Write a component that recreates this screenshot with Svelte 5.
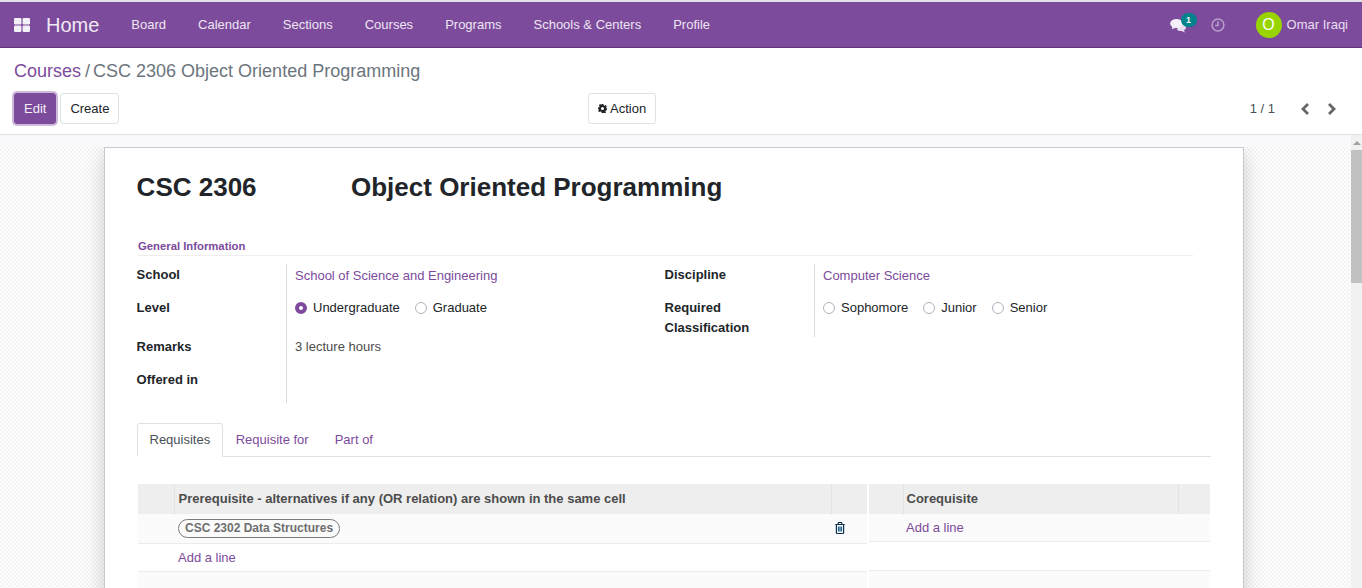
<script>
  const navItems = ['Board', 'Calendar', 'Sections', 'Courses', 'Programs', 'Schools & Centers', 'Profile'];
  const tabs = ['Requisites', 'Requisite for', 'Part of'];
</script>

<div class="page">
  <div class="topline"></div>
  <header class="nav">
    <svg class="apps" width="16" height="14" viewBox="0 0 16 14" aria-hidden="true">
      <rect x="0" y="0" width="7.4" height="6.4" rx="1.2" />
      <rect x="8.6" y="0" width="7.4" height="6.4" rx="1.2" />
      <rect x="0" y="7.6" width="7.4" height="6.4" rx="1.2" />
      <rect x="8.6" y="7.6" width="7.4" height="6.4" rx="1.2" />
    </svg>
    <span class="brand">Home</span>
    <nav class="menu">
      {#each navItems as item}
        <span>{item}</span>
      {/each}
    </nav>
    <div class="systray">
      <div class="chat">
        <svg width="17" height="15" viewBox="0 0 17 15" aria-hidden="true">
          <path class="back" d="M9 5c3.6 0 7 1.7 7 4.2 0 1.300-.9 2.300-2 3l.9 2.300-3.300-1.500c-1.500.2-3.600-.1-4.600-1.200z" />
          <ellipse cx="6.500" cy="5.500" rx="6.300" ry="4.500" />
          <path d="M2.500 8l-.6 3.200L6 9.500z" />
        </svg>
        <span class="badge">1</span>
      </div>
      <svg class="clock" width="14" height="14" viewBox="0 0 14 14" aria-hidden="true">
        <circle cx="7" cy="7" r="5.900" />
        <path d="M7 3.200V7.400H4.200" />
      </svg>
      <div class="user">
        <span class="avatar">O</span>
        <span class="username">Omar Iraqi</span>
      </div>
    </div>
  </header>

  <section class="panel">
    <div class="crumbs"><span class="crumb-link">Courses</span><span class="crumb-sep">/</span><span>CSC 2306 Object Oriented Programming</span></div>
    <div class="actions">
      <div class="left-btns">
        <button class="btn primary">Edit</button>
        <button class="btn">Create</button>
      </div>
      <button class="btn action">
        <svg width="9" height="9" viewBox="0 0 10 10" aria-hidden="true">
          <path fill-rule="evenodd" d="M4 0h2l.3 1.400 1.100.5L8.600 1.100 9.900 2.500 9 3.700l.4 1 .6.300v1.700l-1.300.4-.5 1 .8 1.200-1.400 1.300-1.200-.8-1 .4L6 10H4l-.3-1.400-1-.4-1.200.8L.1 7.700l.8-1.200-.5-1L0 5.200V3.800l1.300-.3.400-1L1 1.300 2.300.1l1.200.8 .3-.1zM5 3.300a1.700 1.700 0 1 0 0 3.400 1.700 1.700 0 0 0 0-3.400z" />
        </svg>
        Action
      </button>
      <div class="pager">
        <span class="count">1 / 1</span>
        <svg width="10" height="14" viewBox="0 0 10 14" aria-hidden="true"><path d="M8 2 3 7l5 5" /></svg>
        <svg width="10" height="14" viewBox="0 0 10 14" aria-hidden="true"><path d="M2 2l5 5-5 5" /></svg>
      </div>
    </div>
  </section>

  <div class="content">
    <main class="scroller">
      <article class="sheet">
        <h1 class="title"><span class="code">CSC 2306</span><span>Object Oriented Programming</span></h1>

        <h2 class="group-title">General Information</h2>

        <div class="groups">
          <div class="group g-left">
            <div class="label">School</div>
            <div class="value"><span class="link">School of Science and Engineering</span></div>
            <div class="label">Level</div>
            <div class="value radios">
              <label class="radio"><i class="dot on"></i>Undergraduate</label>
              <label class="radio"><i class="dot"></i>Graduate</label>
            </div>
            <div class="label">Remarks</div>
            <div class="value muted">3 lecture hours</div>
            <div class="label">Offered in</div>
            <div class="value"></div>
          </div>

          <div class="group g-right">
            <div class="label">Discipline</div>
            <div class="value"><span class="link">Computer Science</span></div>
            <div class="label">Required Classification</div>
            <div class="value radios">
              <label class="radio"><i class="dot"></i>Sophomore</label>
              <label class="radio"><i class="dot"></i>Junior</label>
              <label class="radio"><i class="dot"></i>Senior</label>
            </div>
          </div>
        </div>

        <div class="tabs">
          {#each tabs as tab, i}
            <span class="tab" class:active={i === 0}>{tab}</span>
          {/each}
        </div>

        <div class="tables">
          <table class="list t-left">
            <thead>
              <tr>
                <th class="c-handle"></th>
                <th>Prerequisite - alternatives if any (OR relation) are shown in the same cell</th>
                <th class="c-end"></th>
              </tr>
            </thead>
            <tbody>
              <tr class="r1">
                <td></td>
                <td><span class="pill">CSC 2302 Data Structures</span></td>
                <td class="trash">
                  <svg width="10" height="12" viewBox="0 0 10 12" aria-hidden="true">
                    <path d="M.3 2.500h9.400M3.200 2.300V1.200c0-.4.300-.7.700-.7h2.200c.4 0 .7.300.7.700v1.100" />
                    <path d="M1.400 2.500v8c0 .6.400 1 1 1h5.200c.6 0 1-.4 1-1v-8" />
                    <path class="bars" d="M3.500 4.500v5M5 4.500v5M6.500 4.500v5" />
                  </svg>
                </td>
              </tr>
              <tr class="r2 add"><td></td><td><span class="link">Add a line</span></td><td></td></tr>
              <tr class="fill"><td></td><td></td><td></td></tr>
            </tbody>
          </table>

          <table class="list t-right">
            <thead>
              <tr>
                <th class="c-handle"></th>
                <th>Corequisite</th>
                <th class="c-end"></th>
              </tr>
            </thead>
            <tbody>
              <tr class="r1 alt"><td></td><td><span class="link">Add a line</span></td><td></td></tr>
              <tr class="r2 alt"><td></td><td></td><td></td></tr>
              <tr class="fill"><td></td><td></td><td></td></tr>
            </tbody>
          </table>
        </div>
      </article>
    </main>

    <aside class="scrollbar">
      <div class="arrow"></div>
      <div class="thumb"></div>
    </aside>
  </div>
</div>

<style>
  :global(body) {
    margin: 0;
    background: #fff;
  }
  .page {
    height: 588px;
    overflow: hidden;
    display: flex;
    flex-direction: column;
    font-family: "Liberation Sans", Arial, sans-serif;
    font-size: 13px;
    line-height: 20px;
    color: #212529;
  }
  .topline {
    height: 2px;
    background: #e6e3e8;
    flex: none;
  }
  .nav {
    flex: none;
    height: 45px;
    background: #7c4b9c;
    border-bottom: 1px solid #5e3579;
    display: flex;
    align-items: center;
    padding-left: 14px;
    color: #f0e9f4;
  }
  .apps {
    fill: #f4f0f7;
    flex: none;
  }
  .brand {
    margin-left: 16px;
    font-size: 20px;
    color: #f0eaf4;
  }
  .menu {
    display: flex;
    gap: 32px;
    margin-left: 32px;
  }
  .menu span {
    color: #eee6f2;
  }
  .systray {
    margin-left: auto;
    display: flex;
    align-items: center;
    padding-right: 14px;
  }
  .chat {
    position: relative;
    width: 17px;
    height: 15px;
    margin-right: 24px;
    top: 1px;
  }
  .chat svg {
    display: block;
    fill: #f5effa;
  }
  .chat .back {
    fill: #e9ddf0;
  }
  .badge {
    position: absolute;
    left: 11px;
    top: -5px;
    width: 16px;
    height: 14px;
    border-radius: 8px;
    background: #00838a;
    color: #f4f7f6;
    font-size: 9px;
    font-weight: 700;
    line-height: 14px;
    text-align: center;
  }
  .clock {
    fill: none;
    stroke: #b99fc9;
    stroke-width: 1.500;
    margin-right: 31px;
  }
  .user {
    display: flex;
    align-items: center;
    gap: 5px;
  }
  .avatar {
    width: 26px;
    height: 26px;
    border-radius: 50%;
    background: #98d400;
    color: #fff;
    font-size: 16px;
    line-height: 26px;
    text-align: center;
  }
  .username {
    color: #eadff0;
  }

  .panel {
    flex: none;
    height: 87px;
    box-sizing: border-box;
    border-bottom: 1px solid #dee0e3;
    padding: 12px 14px 0;
  }
  .crumbs {
    font-size: 18px;
    line-height: 22px;
    color: #6c757d;
  }
  .crumb-link {
    color: #7c4b9c;
  }
  .crumb-sep {
    margin: 0 3px 0 4px;
    color: #6c757d;
  }
  .actions {
    display: flex;
    align-items: center;
    margin-top: 11px;
  }
  .left-btns {
    display: flex;
    gap: 4px;
    width: 574px;
  }
  .btn {
    height: 31px;
    box-sizing: border-box;
    padding: 0 9px;
    border: 1px solid #dee2e6;
    border-radius: 3px;
    background: #fff;
    color: #212529;
    font: 13px/20px "Liberation Sans", Arial, sans-serif;
  }
  .btn.primary {
    background: #7c4b9c;
    border-color: #7c4b9c;
    color: #f4eff7;
    box-shadow: 0 0 0 2px #cdb9da;
  }
  .btn.action {
    display: flex;
    align-items: center;
    gap: 3px;
    padding: 0 9px;
  }
  .action svg {
    fill: #212529;
  }
  .pager {
    margin-left: auto;
    display: flex;
    align-items: center;
    padding-right: 11px;
  }
  .pager .count {
    color: #495057;
    margin-right: 25px;
  }
  .pager svg {
    fill: none;
    stroke: #666;
    stroke-width: 2.800;
  }
  .pager svg + svg {
    margin-left: 17px;
  }

  .content {
    flex: 1;
    min-height: 0;
    display: flex;
    background: #f9f9fb;
  }
  .scroller {
    flex: 1;
    min-width: 0;
    margin-top: 12px;
    padding-left: 104px;
    background: repeating-conic-gradient(#f3f3f3 0 25%, #fff 0 50%) 0 0 / 4px 4px;
    overflow: hidden;
  }
  .sheet {
    width: 1140px;
    box-sizing: border-box;
    height: 600px;
    background: #fff;
    border: 1px solid #c8c8d0;
    box-shadow: 0 5px 20px -1px rgba(0, 0, 0, 0.2);
    padding: 0 33px 0 32px;
  }
  .title {
    margin: 22px 0 0 -0.4px;
    display: flex;
    font-size: 26px;
    line-height: 35px;
    font-weight: 700;
    color: #212529;
  }
  .code {
    width: 214.400px;
  }
  .group-title {
    margin: 32px 17px 0 1px;
    height: 19px;
    box-sizing: border-box;
    padding-top: 2px;
    border-bottom: 1px solid #eeeeee;
    color: #7c4b9c;
    font-size: 11.300px;
    font-weight: 700;
    line-height: 15px;
  }
  .groups {
    display: flex;
    margin-top: 8px;
  }
  .group {
    display: grid;
    grid-template-columns: 149px 1fr;
  }
  .g-left {
    width: 528px;
    grid-template-rows: 33px 39px 33px 34px;
  }
  .g-right {
    width: 400px;
    align-self: start;
    grid-template-rows: 33px 40px;
  }
  .label {
    font-weight: 700;
    padding-top: 1px;
    padding-right: 20px;
    margin-left: -0.4px;
  }
  .value {
    border-left: 1px solid #d8dadd;
    padding: 2px 0 0 8px;
  }
  .link {
    color: #7c4b9c;
  }
  .muted {
    color: #4c4c4c;
    padding-top: 1px;
  }
  .radios {
    display: flex;
    gap: 15px;
    padding-top: 1px;
  }
  .radio {
    display: flex;
    align-items: center;
    gap: 6px;
    height: 20px;
  }
  .dot {
    width: 12px;
    height: 12px;
    box-sizing: border-box;
    border: 1px solid #adb5bd;
    border-radius: 50%;
    background: #fff;
  }
  .dot.on {
    border: 4px solid #7c4b9c;
  }
  .tabs {
    display: flex;
    margin-top: 19px;
    height: 34px;
    border-bottom: 1px solid #dee2e6;
    box-sizing: content-box;
    width: 1074px;
  }
  .tab {
    padding: 7px 12px 0;
    height: 34px;
    box-sizing: border-box;
    color: #7c4b9c;
    border: 1px solid transparent;
  }
  .tab.active {
    color: #495057;
    height: 34px;
    margin-top: 1px;
    background: #fff;
    border-color: #dee2e6 #dee2e6 #fff;
    border-radius: 3px 3px 0 0;
    padding: 6px 11.500px 0;
  }
  .tables {
    display: flex;
    gap: 2px;
    margin: 27px 0 0 1px;
    width: 1072px;
  }
  .list {
    border-collapse: collapse;
    table-layout: fixed;
    flex: none;
  }
  .t-left {
    width: 729px;
  }
  .t-right {
    width: 341px;
  }
  th {
    height: 30px;
    padding: 0 0 0 4px;
    box-sizing: border-box;
    background: #eeeeee;
    color: #4c4c4c;
    font-weight: 700;
    text-align: left;
    border-right: 1px solid #e2e2e2;
  }
  th:last-child {
    border-right: 0;
  }
  .c-handle {
    width: 36px;
  }
  .c-end {
    width: 36px;
  }
  .t-right .c-handle {
    width: 34px;
  }
  .t-right .c-end {
    width: 32px;
  }
  .t-right th,
  .t-right td {
    padding-left: 3px;
  }
  td {
    padding: 0 0 0 4px;
    box-sizing: border-box;
    border-bottom: 1px solid #ececec;
  }
  .r1 td {
    height: 29px;
    background: #fbfbfb;
  }
  .r2 td {
    height: 28px;
    background: #fff;
  }
  .add td {
    padding-top: 2px;
  }
  .r1.alt td,
  .r2.alt td {
    height: 28px;
  }
  .r1.alt td {
    height: 27px;
  }
  .r2.alt td {
    background: #fff;
  }
  .fill td {
    height: 40px;
    background: #fbfbfb;
    border-bottom: 0;
  }
  .pill {
    display: inline-block;
    box-sizing: border-box;
    height: 19px;
    padding: 0 6px;
    border: 1px solid #7b7b7b;
    border-radius: 10px;
    color: #6f6f6f;
    font-size: 12px;
    font-weight: 700;
    line-height: 17px;
    vertical-align: middle;
  }
  .trash {
    padding: 0 0 0 4px;
  }
  .trash svg {
    display: block;
    fill: none;
    stroke: #0b3350;
    stroke-width: 1.200;
  }
  .trash .bars {
    stroke: #1d6a95;
  }

  .scrollbar {
    flex: none;
    width: 11px;
    background: #f1f1f1;
  }
  .arrow {
    height: 15px;
    position: relative;
  }
  .arrow::after {
    content: "";
    position: absolute;
    left: 2px;
    top: 6px;
    border-left: 4px solid transparent;
    border-right: 4px solid transparent;
    border-bottom: 4px solid #a0a0a0;
  }
  .thumb {
    height: 133px;
    background: #c1c1c1;
  }
</style>
